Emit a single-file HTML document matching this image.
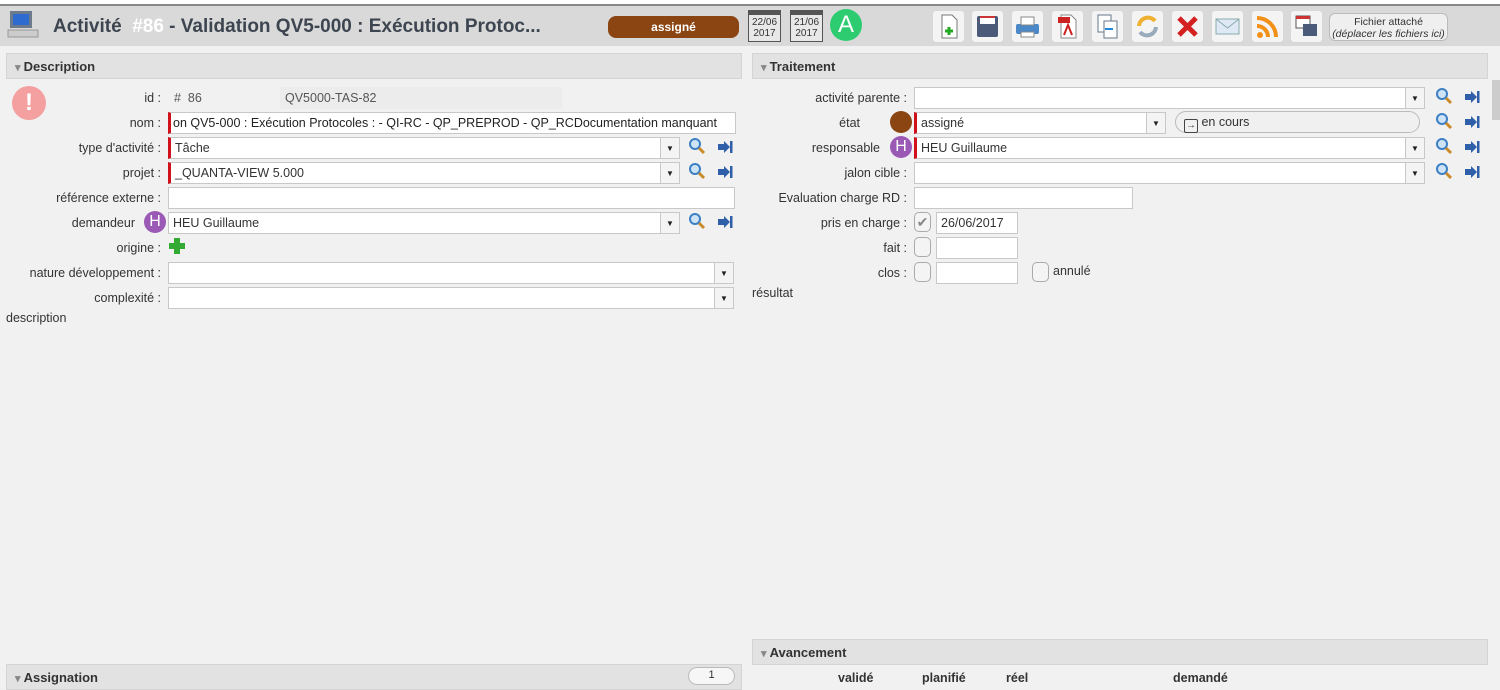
<!DOCTYPE html>
<html><head><meta charset="utf-8"><style>
*{box-sizing:border-box;margin:0;padding:0}
body{width:1500px;height:680px;overflow:hidden;background:#f1f1f1;font-family:"Liberation Sans",sans-serif;font-size:12.5px;color:#333;position:relative}
.a{position:absolute}
.hdr{background:#e2e2e2;border:1px solid #d4d4d4;height:26px;font-weight:bold;font-size:13px;color:#333;padding:5px 0 0 8px}
.hdr:before{content:"▾ ";color:#888;font-size:11px}
.lbl{position:absolute;text-align:right;white-space:nowrap}
.in{position:absolute;height:22px;background:#fff;border:1px solid #c8c8c8;padding:3px 4px;white-space:nowrap;overflow:hidden}
.req{border-left:3px solid #d0101a}
.dd{position:absolute;width:20px;height:22px;border:1px solid #c8c8c8;background:#f4f4f4;font-size:8px;text-align:center;line-height:21px;color:#222}
.sr{position:absolute;width:18px;height:18px}
.ar{position:absolute;width:16px;height:14px}
.tb{position:absolute;top:10px;width:33px;height:33px;background:#f4f4f4;border:1px solid #d8d8d8;border-radius:4px}
.cb{position:absolute;width:17px;height:20px;border:1px solid #aaa;border-radius:5px;background:#f4f4f4}
.av{position:absolute;width:22px;height:22px;border-radius:50%;background:#9b59b6;color:#fff;text-align:center;font-size:16px;line-height:22px}
</style></head><body>
<div class="a" style="left:0;top:0;width:1500px;height:6px;background:#fff;border-bottom:2px solid #888"></div>
<div class="a" style="left:0;top:6px;width:1500px;height:40px;background:#d9d9d9"></div>
<!-- computer icon -->
<svg class="a" style="left:6px;top:10px" width="34" height="32"><rect x="4" y="1" width="22" height="17" fill="#6b7b8c"/><rect x="7" y="4" width="16" height="11" fill="#2d6bd0"/><rect x="2" y="20" width="30" height="7" fill="#ccc" stroke="#999"/></svg>
<div class="a" style="left:53px;top:16px;font-size:19px;font-weight:bold;color:#3d4550;white-space:nowrap">Activité&nbsp; <span style="color:#fff">#86</span> - Validation QV5-000 : Exécution Protoc...</div>
<div class="a" style="left:608px;top:16px;width:131px;height:22px;background:#8b4513;border-radius:8px;color:#fff;text-align:center;line-height:22px;font-size:12px;font-weight:bold">assigné</div>
<div class="a" style="left:748px;top:10px;width:33px;height:32px;background:#e8e8e8;border:1px solid #555;border-top:5px solid #555;font-size:10px;text-align:center;line-height:11px;padding-top:2px">22/06<br>2017</div>
<div class="a" style="left:790px;top:10px;width:33px;height:32px;background:#e8e8e8;border:1px solid #555;border-top:5px solid #555;font-size:10px;text-align:center;line-height:11px;padding-top:2px">21/06<br>2017</div>
<div class="a" style="left:830px;top:9px;width:32px;height:32px;border-radius:50%;background:#2ecc71;color:#fff;font-size:24px;text-align:center;line-height:32px">A</div>
<div class="tb" style="left:932px"><svg width="31" height="31"><path d="M9 4h10l5 5v18H9z" fill="#fff" stroke="#777"/><path d="M12 20h8M16 16v8" stroke="#2a2" stroke-width="3"/></svg></div>
<div class="tb" style="left:971px"><svg width="31" height="31"><rect x="5" y="5" width="21" height="21" rx="2" fill="#4a5a78"/><rect x="8" y="5" width="15" height="8" fill="#fff"/><rect x="8" y="5" width="15" height="2" fill="#c33"/></svg></div>
<div class="tb" style="left:1011px"><svg width="31" height="31"><rect x="4" y="13" width="23" height="10" rx="2" fill="#4a88c8"/><rect x="9" y="6" width="13" height="8" fill="#fff" stroke="#888"/><rect x="9" y="21" width="13" height="5" fill="#fff" stroke="#888"/></svg></div>
<div class="tb" style="left:1051px"><svg width="31" height="31"><path d="M9 4h10l5 5v18H9z" fill="#fff" stroke="#888"/><rect x="6" y="6" width="12" height="6" fill="#c22"/><path d="M12 24 16 14 20 24" stroke="#c22" fill="none" stroke-width="2"/></svg></div>
<div class="tb" style="left:1091px"><svg width="31" height="31"><rect x="6" y="4" width="13" height="17" fill="#fff" stroke="#678"/><rect x="12" y="10" width="13" height="17" fill="#fff" stroke="#678"/><path d="M13 18h8" stroke="#28d" stroke-width="2"/></svg></div>
<div class="tb" style="left:1131px"><svg width="31" height="31"><path d="M7 15a9 9 0 0 1 16-5" stroke="#f0b030" stroke-width="4" fill="none"/><path d="M24 16a9 9 0 0 1-16 5" stroke="#9ab" stroke-width="4" fill="none"/></svg></div>
<div class="tb" style="left:1171px"><svg width="31" height="31"><path d="M7 7 24 24M24 7 7 24" stroke="#d42020" stroke-width="5"/></svg></div>
<div class="tb" style="left:1211px"><svg width="31" height="31"><rect x="4" y="8" width="23" height="15" fill="#dfe9f5" stroke="#8aa"/><path d="M4 8 15.5 17 27 8" stroke="#8aa" fill="none"/></svg></div>
<div class="tb" style="left:1251px"><svg width="31" height="31"><circle cx="8" cy="24" r="3" fill="#f29018"/><path d="M5 15a11 11 0 0 1 11 11M5 7a19 19 0 0 1 19 19" stroke="#f29018" stroke-width="4" fill="none"/></svg></div>
<div class="tb" style="left:1290px"><svg width="31" height="31"><rect x="5" y="5" width="14" height="12" fill="#fff" stroke="#555"/><rect x="5" y="5" width="14" height="3" fill="#c33"/><rect x="12" y="13" width="14" height="12" fill="#4a5a78"/></svg></div>
<div class="a" style="left:1329px;top:13px;width:119px;height:28px;border:1px solid #bbb;border-radius:6px;background:#efefef;font-size:10.5px;text-align:center;line-height:12px;padding-top:2px;color:#333">Fichier attaché<br><i>(déplacer les fichiers ici)</i></div>

<div class="hdr a" style="left:6px;top:53px;width:736px">Description</div>
<div class="hdr a" style="left:752px;top:53px;width:736px">Traitement</div>
<div class="a" style="left:1492px;top:80px;width:8px;height:40px;background:#ccc"></div>

<div class="a" style="left:12px;top:86px;width:34px;height:34px;border-radius:50%;background:#f4a0a0;color:#fff;font-size:24px;font-weight:bold;text-align:center;line-height:34px">!</div>
<div class="lbl" style="right:1339px;top:91px">id :</div>
<div class="a" style="left:174px;top:91px;color:#555">#&nbsp; 86</div>
<div class="a" style="left:280px;top:87px;width:282px;height:22px;background:#ececec;padding:4px 5px;color:#555">QV5000-TAS-82</div>
<div class="lbl" style="right:1339px;top:116px">nom :</div>
<div class="in req" style="left:168px;top:112px;width:568px;padding-left:2px;color:#222">on QV5-000 : Exécution Protocoles : - QI-RC - QP_PREPROD - QP_RCDocumentation manquant</div>
<div class="lbl" style="right:1339px;top:141px">type d'activité :</div>
<div class="in req" style="left:168px;top:137px;width:493px">Tâche</div><div class="dd" style="left:660px;top:137px">▼</div>
<div class="lbl" style="right:1339px;top:166px">projet :</div>
<div class="in req" style="left:168px;top:162px;width:493px">_QUANTA-VIEW 5.000</div><div class="dd" style="left:660px;top:162px">▼</div>
<div class="lbl" style="right:1339px;top:191px">référence externe :</div>
<div class="in" style="left:168px;top:187px;width:567px"></div>
<div class="lbl" style="right:1365px;top:216px">demandeur</div>
<div class="av" style="left:144px;top:211px">H</div>
<div class="in" style="left:168px;top:212px;width:493px">HEU Guillaume</div><div class="dd" style="left:660px;top:212px">▼</div>
<div class="lbl" style="right:1339px;top:241px">origine :</div>
<svg class="a" style="left:168px;top:237px" width="18" height="18"><path d="M6 1h6v5h5v6h-5v5H6v-5H1V6h5z" fill="#3a3"/></svg>
<div class="lbl" style="right:1339px;top:266px">nature développement :</div>
<div class="in" style="left:168px;top:262px;width:547px"></div><div class="dd" style="left:714px;top:262px">▼</div>
<div class="lbl" style="right:1339px;top:291px">complexité :</div>
<div class="in" style="left:168px;top:287px;width:547px"></div><div class="dd" style="left:714px;top:287px">▼</div>
<div class="a" style="left:6px;top:311px">description</div>

<div class="lbl" style="right:593px;top:91px">activité parente :</div>
<div class="in" style="left:914px;top:87px;width:492px"></div><div class="dd" style="left:1405px;top:87px">▼</div>
<div class="lbl" style="right:640px;top:116px">état</div>
<div class="a" style="left:890px;top:111px;width:22px;height:22px;border-radius:50%;background:#8b4513"></div>
<div class="in req" style="left:914px;top:112px;width:233px">assigné</div><div class="dd" style="left:1146px;top:112px">▼</div>
<div class="a" style="left:1175px;top:111px;width:245px;height:22px;border:1px solid #bbb;border-radius:11px;background:#f0f0f0;padding:3px 0 0 8px"><span style="display:inline-block;width:14px;height:14px;border:1.5px solid #444;border-radius:2px;font-size:10px;line-height:11px;text-align:center;vertical-align:-2px">→</span> en cours</div>
<div class="lbl" style="right:620px;top:141px">responsable</div>
<div class="av" style="left:890px;top:136px">H</div>
<div class="in req" style="left:914px;top:137px;width:492px">HEU Guillaume</div><div class="dd" style="left:1405px;top:137px">▼</div>
<div class="lbl" style="right:593px;top:166px">jalon cible :</div>
<div class="in" style="left:914px;top:162px;width:492px"></div><div class="dd" style="left:1405px;top:162px">▼</div>
<div class="lbl" style="right:593px;top:191px">Evaluation charge RD :</div>
<div class="in" style="left:914px;top:187px;width:219px"></div>
<div class="lbl" style="right:593px;top:216px">pris en charge :</div>
<div class="cb" style="left:914px;top:212px;color:#888;font-size:14px;line-height:18px;text-align:center">✔</div>
<div class="in" style="left:936px;top:212px;width:82px">26/06/2017</div>
<div class="lbl" style="right:593px;top:241px">fait :</div>
<div class="cb" style="left:914px;top:237px"></div><div class="in" style="left:936px;top:237px;width:82px"></div>
<div class="lbl" style="right:593px;top:266px">clos :</div>
<div class="cb" style="left:914px;top:262px"></div><div class="in" style="left:936px;top:262px;width:82px"></div>
<div class="cb" style="left:1032px;top:262px"></div><div class="a" style="left:1053px;top:264px">annulé</div>
<div class="a" style="left:752px;top:286px">résultat</div>

<div class="hdr a" style="left:752px;top:639px;width:736px;height:26px">Avancement</div>
<div class="hdr a" style="left:6px;top:664px;width:736px;height:26px">Assignation</div>
<div class="a" style="left:688px;top:667px;width:47px;height:18px;border:1px solid #bbb;border-radius:9px;background:#f6f6f6;text-align:center;font-size:11px;line-height:15px">1</div>
<div class="a" style="left:838px;top:671px;font-weight:bold">validé</div>
<div class="a" style="left:922px;top:671px;font-weight:bold">planifié</div>
<div class="a" style="left:1006px;top:671px;font-weight:bold">réel</div>
<div class="a" style="left:1173px;top:671px;font-weight:bold">demandé</div>

<svg width="0" height="0" style="position:absolute"><defs>
<g id="s"><circle cx="7" cy="7" r="5" fill="#cfe3f7" stroke="#3b7fc4" stroke-width="2"/><path d="M11 11 16 16" stroke="#c98a2a" stroke-width="3"/></g>
<g id="r"><path d="M1 4h6V1l6 6-6 6V10H1z" fill="#2f5fa8"/><rect x="13" y="1" width="2.5" height="12" fill="#2f5fa8"/></g></defs></svg>
<svg class="sr" style="left:688px;top:137px"><use href="#s"/></svg><svg class="ar" style="left:717px;top:140px"><use href="#r"/></svg>
<svg class="sr" style="left:688px;top:162px"><use href="#s"/></svg><svg class="ar" style="left:717px;top:165px"><use href="#r"/></svg>
<svg class="sr" style="left:688px;top:212px"><use href="#s"/></svg><svg class="ar" style="left:717px;top:215px"><use href="#r"/></svg>
<svg class="sr" style="left:1435px;top:87px"><use href="#s"/></svg><svg class="ar" style="left:1464px;top:90px"><use href="#r"/></svg>
<svg class="sr" style="left:1435px;top:112px"><use href="#s"/></svg><svg class="ar" style="left:1464px;top:115px"><use href="#r"/></svg>
<svg class="sr" style="left:1435px;top:137px"><use href="#s"/></svg><svg class="ar" style="left:1464px;top:140px"><use href="#r"/></svg>
<svg class="sr" style="left:1435px;top:162px"><use href="#s"/></svg><svg class="ar" style="left:1464px;top:165px"><use href="#r"/></svg>
</body></html>
